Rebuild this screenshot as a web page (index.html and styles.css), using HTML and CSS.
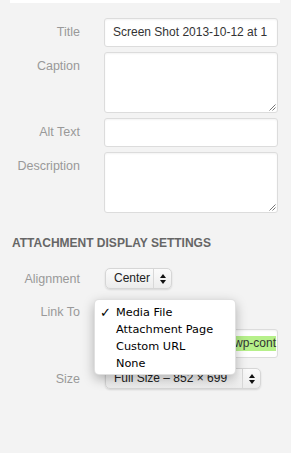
FILE: index.html
```html
<!DOCTYPE html>
<html>
<head>
<meta charset="utf-8">
<link rel="stylesheet" href="styles.css">
</head>
<body>
<div class="top-strip"></div>
<div class="fields">
  <div class="row">
    <div class="label">Title</div>
    <div class="field input"><span class="value">Screen Shot 2013-10-12 at 1</span></div>
  </div>
  <div class="row">
    <div class="label">Caption</div>
    <div class="field textarea">
      <svg class="grip" width="8" height="8" viewBox="0 0 8 8"><path d="M7.5 1.5 L1.5 7.5 M7.5 4.5 L4.5 7.5" stroke="#777" stroke-width="1" fill="none"/></svg>
    </div>
  </div>
  <div class="row">
    <div class="label">Alt Text</div>
    <div class="field input"></div>
  </div>
  <div class="row">
    <div class="label">Description</div>
    <div class="field textarea">
      <svg class="grip" width="8" height="8" viewBox="0 0 8 8"><path d="M7.5 1.5 L1.5 7.5 M7.5 4.5 L4.5 7.5" stroke="#777" stroke-width="1" fill="none"/></svg>
    </div>
  </div>
</div>

<div class="settings">
  <h3 class="heading">ATTACHMENT DISPLAY SETTINGS</h3>
  <div class="srow align-row">
    <div class="label slabel">Alignment</div>
    <div class="select select-center">
      <span class="sel-text">Center</span>
      <span class="sel-arrows"><svg width="6" height="10" viewBox="0 0 6 10"><path d="M3 0 L6 4 L0 4 Z M3 10 L6 6 L0 6 Z" fill="#111"/></svg></span>
    </div>
  </div>
  <div class="srow link-row">
    <div class="label slabel">Link To</div>
    <div class="select select-link"><span class="sel-text"></span></div>
  </div>
  <div class="srow url-row">
    <div class="label slabel"></div>
    <div class="field url"><span class="hl">wp-cont</span></div>
  </div>
  <div class="srow size-row">
    <div class="label slabel">Size</div>
    <div class="select select-size">
      <span class="sel-text">Full Size – 852 × 699</span>
      <span class="sel-arrows"><svg width="6" height="10" viewBox="0 0 6 10"><path d="M3 0 L6 4 L0 4 Z M3 10 L6 6 L0 6 Z" fill="#111"/></svg></span>
    </div>
  </div>
</div>

<div class="menu">
  <div class="item"><span class="check">✓</span>Media File</div>
  <div class="item">Attachment Page</div>
  <div class="item">Custom URL</div>
  <div class="item">None</div>
</div>
</body>
</html>
```
FILE: styles.css
```css
html, body {
  margin: 0;
  padding: 0;
}
body {
  background: #f3f3f3;
  font-family: "Liberation Sans", Arial, sans-serif;
  width: 291px;
  height: 453px;
  overflow: hidden;
  position: relative;
}
.top-strip {
  height: 3px;
  margin: 0 11px 0 10px;
  background: #ffffff;
}
.fields {
  padding-top: 15px;
  display: flex;
  flex-direction: column;
  gap: 5px;
}
.row {
  display: flex;
  align-items: flex-start;
}
.label {
  width: 92px;
  box-sizing: border-box;
  padding-right: 12px;
  text-align: right;
  color: #999;
  font-size: 12.5px;
  line-height: 29px;
  flex: none;
}
.field {
  box-sizing: border-box;
  width: 174px;
  margin-left: 12px;
  background: #ffffff;
  border: 1px solid #dcdcdc;
  border-radius: 3px;
  box-shadow: inset 0 1px 2px rgba(0,0,0,0.05);
  position: relative;
  overflow: hidden;
}
.input {
  height: 29px;
  padding: 0 8px;
  line-height: 27px;
  font-size: 12px;
  color: #333;
  white-space: nowrap;
}
.textarea {
  height: 61px;
}
.grip {
  position: absolute;
  right: 1px;
  bottom: 1px;
}
.settings {
  padding-top: 23px;
}
.heading {
  margin: 0 0 0 12px;
  font-size: 12px;
  line-height: 15px;
  font-weight: bold;
  color: #666;
}
.srow {
  display: flex;
  align-items: flex-start;
}
.slabel {
  line-height: 22px;
}
.align-row {
  margin-top: 17px;
}
.link-row {
  margin-top: 11px;
}
.url-row {
  margin-top: 6px;
}
.size-row {
  margin-top: 10px;
}
.select {
  box-sizing: border-box;
  height: 21px;
  margin-left: 13px;
  display: flex;
  align-items: stretch;
  background: linear-gradient(#fbfbfb, #ececec);
  border: 1px solid #d6d6d6;
  border-radius: 5px;
  box-shadow: 0 1px 2px rgba(0,0,0,0.12);
  font-size: 12px;
  color: #222;
}
.sel-text {
  flex: 1;
  padding-left: 8px;
  line-height: 19px;
  white-space: nowrap;
  overflow: hidden;
}
.sel-arrows {
  width: 17px;
  border-left: 1px solid #d8d8d8;
  display: flex;
  align-items: center;
  justify-content: center;
}
.select-center {
  width: 67px;
}
.select-link {
  width: 120px;
}
.select-size {
  width: 156px;
}
.url {
  height: 29px;
  width: 174px;
  font-size: 12px;
  color: #333;
  white-space: nowrap;
  display: flex;
  align-items: center;
  justify-content: flex-end;
  padding-right: 1px;
}
.hl {
  background: #b6f08a;
  line-height: 15px;
  padding-left: 1px;
}
.menu {
  position: absolute;
  left: 94px;
  top: 299px;
  width: 142px;
  height: 76px;
  box-sizing: border-box;
  padding-top: 4px;
  background: #ffffff;
  border: 1px solid rgba(0,0,0,0.12);
  border-radius: 5px;
  box-shadow: 0 4px 12px rgba(0,0,0,0.28);
  font-family: "DejaVu Sans", sans-serif;
  font-size: 11.3px;
  color: #000;
}
.item {
  position: relative;
  height: 17px;
  line-height: 17px;
  padding-left: 21px;
  white-space: nowrap;
}
.check {
  position: absolute;
  left: 5px;
  top: 0;
  font-size: 13px;
  font-weight: bold;
}
```
